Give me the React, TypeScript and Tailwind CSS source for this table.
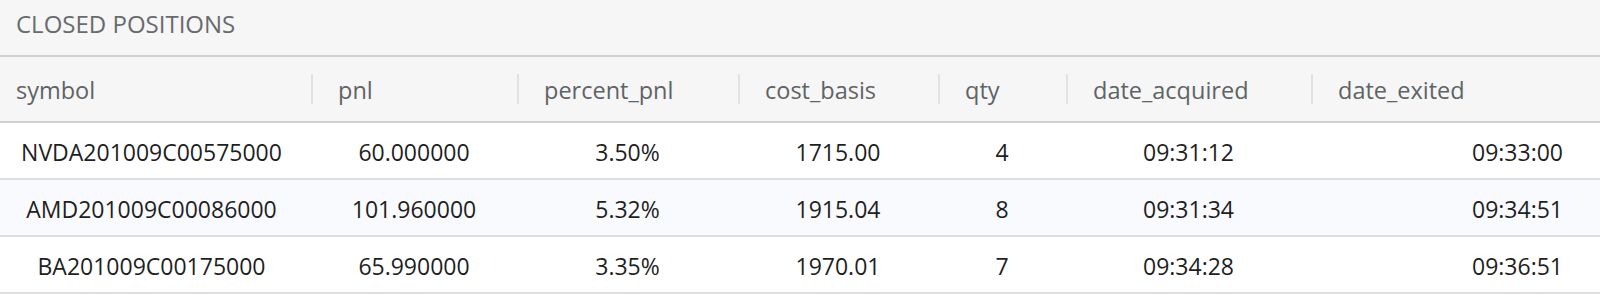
const columns = [
  {key: "symbol", width: "w-[311px]"},
  {key: "pnl", width: "w-[206px]"},
  {key: "percent_pnl", width: "w-[221px]"},
  {key: "cost_basis", width: "w-[200px]"},
  {key: "qty", width: "w-[128px]"},
  {key: "date_acquired", width: "w-[245px]"},
  {key: "date_exited", width: "flex-1"},
];

const positions = [
  {symbol: "NVDA201009C00575000", pnl: "60.000000", percent_pnl: "3.50%", cost_basis: "1715.00", qty: "4", date_acquired: "09:31:12", date_exited: "09:33:00"},
  {symbol: "AMD201009C00086000", pnl: "101.960000", percent_pnl: "5.32%", cost_basis: "1915.04", qty: "8", date_acquired: "09:31:34", date_exited: "09:34:51"},
  {symbol: "BA201009C00175000", pnl: "65.990000", percent_pnl: "3.35%", cost_basis: "1970.01", qty: "7", date_acquired: "09:34:28", date_exited: "09:36:51"},
];

export default function App() {
  return (
    <div className="w-[1600px] h-[298px] bg-white font-['Open_Sans',sans-serif] overflow-hidden">
      {/* title bar */}
      <div className="h-[57px] bg-[#f5f6f5] border-b-2 border-[#cdd1d4] flex items-center pl-4 pb-[8px]">
        <h2 className="text-[24px] leading-none uppercase text-[#686b6e]">Closed Positions</h2>
      </div>

      {/* header row */}
      <div className="h-[66px] bg-[#f5f6f5] border-b-2 border-[#cdd1d4] flex items-center">
        {columns.map((col, i) => (
          <div key={col.key} className={`${col.width} h-full flex items-center`}>
            {i > 0 && <div className="w-[2px] h-[30px] bg-[#e0e3e5]" />}
            <span className={`text-[23.5px] leading-none pt-[4px] text-[#5f6366] ${i === 0 ? "pl-4" : "pl-[25px]"}`}>{col.key}</span>
          </div>
        ))}
      </div>

      {/* body rows */}
      {positions.map((p, r) => (
        <div
          key={p.symbol}
          className={`h-[57px] flex items-center border-b-2 border-[#dcdfe2] ${r % 2 === 1 ? "bg-[#f9fafd]" : "bg-white"}`}
        >
          {columns.map((col, i) => (
            <div
              key={col.key}
              className={`${col.width} text-[23px] leading-none pt-[3px] text-[#1f1f1f] ${i === columns.length - 1 ? "text-right pr-[37px]" : "text-center"} ${i === 0 ? "pr-2" : ""}`}
            >
              {p[col.key as keyof typeof p]}
            </div>
          ))}
        </div>
      ))}
    </div>
  );
}
